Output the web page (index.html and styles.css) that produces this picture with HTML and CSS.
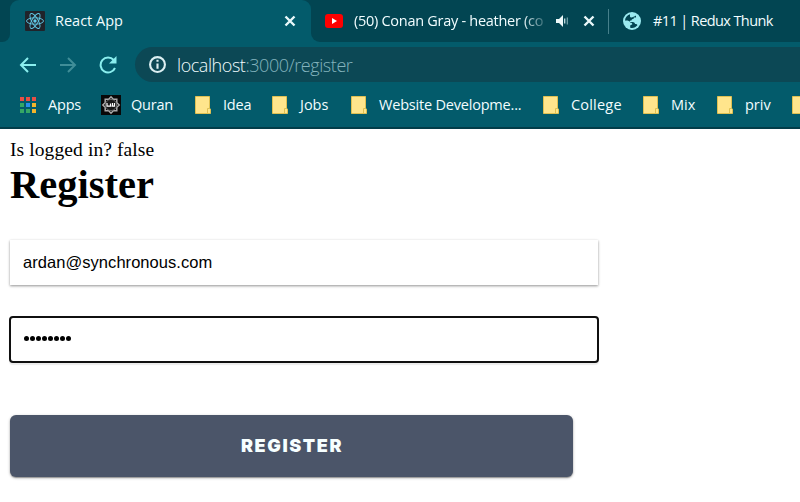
FILE: index.html
```
<!DOCTYPE html>
<html lang="en">
<head>
<meta charset="utf-8">
<title>React App</title>
<link rel="stylesheet" href="styles.css">
</head>
<body>
<svg width="0" height="0" class="defs" aria-hidden="true">
  <symbol id="folder" viewBox="0 0 16 18"><path d="M.5.5h14v11.700l1 .8v4.500H.5z" fill="#ffe58c" stroke="#dfc052"/><path d="M12.500 17v-4.500h2" fill="none" stroke="#dfc052"/></symbol>
  <symbol id="close" viewBox="0 0 12 12"><path d="M1.500 1.500l9 9m0-9l-9 9" stroke="#e9f8fa" stroke-width="2.400"/></symbol>
</svg>
<header class="browser">
  <div class="tabs">
    <div class="tab-edge"></div>
    <div class="tab tab-active">
      <svg class="react" viewBox="0 0 20 20"><rect width="20" height="20" rx="1" fill="#20232a"/><g fill="none" stroke="#61cbe8" stroke-width=".9"><ellipse cx="10" cy="10" rx="8.500" ry="3.200"/><ellipse cx="10" cy="10" rx="8.500" ry="3.200" transform="rotate(60 10 10)"/><ellipse cx="10" cy="10" rx="8.500" ry="3.200" transform="rotate(120 10 10)"/></g><circle cx="10" cy="10" r="1.700" fill="#61cbe8"/></svg>
      <span class="tab-title react-title">React App</span>
      <svg class="close"><use href="#close"/></svg>
    </div>
    <div class="tab tab-video">
      <svg class="video" viewBox="0 0 18 14"><rect width="18" height="14" rx="3" fill="#f00"/><path d="M7 4l5 3-5 3z" fill="#fff"/></svg>
      <span class="tab-title video-title">(50) Conan Gray - heather (co</span>
      <svg class="sound" viewBox="0 0 13 12"><path d="M0 4h3l4-4v12L3 8H0z" fill="#edfafa"/><path d="M8.700 3.500v5" stroke="#c6e0e4" stroke-width="1.300"/><path d="M11.300 2.500v7" stroke="#78a5ad" stroke-width="1.200"/></svg>
      <svg class="close"><use href="#close"/></svg>
    </div>
    <div class="tab tab-redux">
      <svg class="globe" viewBox="0 0 18 18"><circle cx="9" cy="9" r="9" fill="#9beaf0"/><path d="M7 2.200c-3 .8-5 3.600-5 6.500 2.400-.3 4.500.2 5.500 2 1.200 0 2 .5 1.700 1.900-1 .3-2 .3-2 1.400v1.700c3 .9 5.600-.5 7.200-2.400-.4-1.400-1.200-1.300-2.300-1.300-.3-1.300-1-2-2.500-2H6.500c0-1.200 1-1.400 2-1.500 0-1.300 1-1.600 2.200-1.700V5.500H13V3.600C10.500 5.200 7.600 6.500 7 4.500z" fill="#024552"/></svg>
      <span class="tab-title redux-title">#11 | Redux Thunk</span>
    </div>
  </div>
  <div class="toolbar">
    <svg class="nav" viewBox="0 0 18 18"><path d="M17 9H2M9 2L2 9l7 7" fill="none" stroke="#8aeeee" stroke-width="2"/></svg>
    <svg class="nav" viewBox="0 0 18 18"><path d="M1 9h15M9 2l7 7-7 7" fill="none" stroke="#408e98" stroke-width="2"/></svg>
    <svg class="nav" viewBox="0 0 18 18"><path d="M14.700 4A7.500 7.500 0 1 0 16 12" fill="none" stroke="#8aeeee" stroke-width="2"/><path d="M17.500 0v7.500H10z" fill="#8aeeee"/></svg>
    <div class="omnibox">
      <svg class="info" viewBox="0 0 16 16"><circle cx="8" cy="8" r="7" fill="none" stroke="#dceff2" stroke-width="2"/><path d="M8 3.500v2M8 7v5" stroke="#dceff2" stroke-width="2"/></svg>
      <span class="url"><b>localhost</b>:3000/register</span>
    </div>
  </div>
  <nav class="bookmarks">
    <a class="bm"><svg class="apps" viewBox="0 0 17 17"><path fill="#e84f45" d="M0 0h4v4H0zM6 0h4v4H6zM12 0h4v4h-4z"/><path fill="#35a765" d="M0 6h4v4H0zM0 12h4v4H0zM6 12h4v4H6z"/><path fill="#288fee" d="M6 6h4v4H6z"/><path fill="#f3b52b" d="M12 6h4v4h-4zM12 12h4v4h-4z"/></svg><span class="t-apps">Apps</span></a>
    <a class="bm"><svg class="quran" viewBox="0 0 20 20"><path fill="#080808" d="M0 0h20v20H0z"/><path d="M10 1.800l2.300 2.400h3.500v3.500L18.200 10l-2.400 2.300v3.500h-3.500L10 18.200l-2.300-2.400H4.200v-3.500L1.800 10l2.400-2.300V4.200h3.500z" fill="none" stroke="#aaa" stroke-width="1.500"/><circle cx="10" cy="10" r="5.600" fill="#181818" stroke="#777" stroke-width=".8"/><path d="M6 8v3.200h3.500V8.500m1 2.700h3V8m-2 0v3" fill="none" stroke="#fff" stroke-width="1.200"/></svg><span class="t-quran">Quran</span></a>
    <a class="bm"><svg class="folder"><use href="#folder"/></svg><span class="t-idea">Idea</span></a>
    <a class="bm"><svg class="folder"><use href="#folder"/></svg><span class="t-jobs">Jobs</span></a>
    <a class="bm"><svg class="folder"><use href="#folder"/></svg><span class="t-web">Website Developme...</span></a>
    <a class="bm"><svg class="folder"><use href="#folder"/></svg><span class="t-college">College</span></a>
    <a class="bm"><svg class="folder"><use href="#folder"/></svg><span class="t-mix">Mix</span></a>
    <a class="bm"><svg class="folder"><use href="#folder"/></svg><span class="t-priv">priv</span></a>
    <a class="bm"><svg class="folder"><use href="#folder"/></svg></a>
  </nav>
</header>
<main>
  <p class="status">Is logged in? false</p>
  <h1>Register</h1>
  <form>
    <div class="field email">ardan@synchronous.com</div>
    <div class="field password"><i></i><i></i><i></i><i></i><i></i><i></i><i></i><i></i></div>
    <button type="button">REGISTER</button>
  </form>
</main>
</body>
</html>
```
FILE: styles.css
```
* { box-sizing: border-box; }
body { margin: 0; width: 800px; height: 502px; overflow: hidden; background: #fff; color: #000; }
.defs { display: block; }
svg { flex: none; }
.browser { height: 129px; background: #035b6b; border-bottom: 2px solid #023d49; font-family: "Open Sans", "Noto Sans", sans-serif; font-size: 15px; font-weight: 300; color: #f2fdff; overflow: hidden; }
.tabs { display: flex; height: 42px; }
.tab-edge { width: 10px; background: #024552; border-bottom-right-radius: 8px; }
.tab { display: flex; align-items: center; height: 42px; white-space: nowrap; }
.tab-active { width: 301px; padding: 0 15px; background: linear-gradient(#024552, #024552) 0 0 / 10px 10px no-repeat, linear-gradient(#024552, #024552) 100% 0 / 10px 10px no-repeat; position: relative; }
.tab-active::before { content: ""; position: absolute; inset: 0; background: #035b6b; border-radius: 9px 9px 0 0; }
.tab-active > * { position: relative; }
.react { width: 20px; height: 20px; margin-right: 10px; }
.tab-title { font-weight: 400; line-height: 20px; font-size: 14.500px; }
.react-title { width: 229px; }
.close { width: 12px; height: 12px; }
.tab-video { width: 298px; padding-left: 14px; background: #024552; border-bottom-left-radius: 9px; }
.video { width: 18px; height: 14px; margin-right: 11px; }
.video-title { width: 192px; margin-right: 10px; letter-spacing: -.28px; -webkit-mask-image: linear-gradient(90deg, #000 168px, transparent 196px); }
.sound { width: 13px; height: 12px; margin-right: 14px; }
.tab-redux { flex: 1; padding-left: 15px; background: linear-gradient(#46808b, #46808b) 0 9px / 1px 25px no-repeat #024552; margin-left: -1px; }
.globe { width: 18px; height: 18px; margin-right: 12px; }
.redux-title { letter-spacing: -.6px; }
.toolbar { display: flex; height: 45px; align-items: center; padding-left: 19px; }
.nav { width: 18px; height: 18px; margin-right: 22px; }
.omnibox { display: flex; align-items: center; flex: 1; height: 35px; margin-left: -4px; padding-left: 14px; background: #0c4855; border-radius: 18px 0 0 18px; }
.info { width: 17px; height: 17px; margin-right: 11px; }
.url { font-size: 18px; line-height: 24px; letter-spacing: -.44px; color: #83b3bd; white-space: nowrap; }
.url b { font-weight: 300; color: #f2fdff; }
.bookmarks { display: grid; grid-template-columns: 81px 94px 77px 79px 192px 100px 74px 75px 16px; height: 36px; padding-left: 20px; }
.bm { display: flex; align-items: center; white-space: nowrap; font-weight: 400; font-size: 14.500px; }
.bm span { line-height: 20px; }
.t-web { letter-spacing: -.2px; }
.t-quran, .t-idea, .t-apps { letter-spacing: -.2px; }
.t-college { letter-spacing: .2px; }
.folder { width: 16px; height: 18px; margin-right: 12px; }
.apps { width: 17px; height: 17px; margin-right: 11px; }
.quran { width: 20px; height: 20px; margin-right: 10px; }
main { padding: 9px 10px; }
.status { margin: 0; height: 24px; font: 19.500px/24px "Liberation Serif", serif; letter-spacing: .1px; }
h1 { margin: 0; height: 48px; font: bold 40.500px/46px "Liberation Serif", serif; }
form { padding-top: 30px; }
.field { width: 588px; height: 45px; display: flex; background: #fff; font: 16.500px/20px "Liberation Sans", sans-serif; }
.email { align-items: center; padding: 0 0 2px 13px; letter-spacing: .05px; box-shadow: 0 1px 3px rgba(0,0,0,.22), 0 1px 2px rgba(0,0,0,.24); }
.password { width: 590px; height: 47px; margin: 31px 0 0 -1px; border: 2px solid #101010; border-radius: 4px; padding: 18px 0 0 13px; gap: 1px; box-shadow: 0 2px 1px rgba(0,0,0,.08); }
.password i { width: 5px; height: 5px; border-radius: 50%; background: #000; }
button { display: block; width: 563px; height: 62px; margin: 52px 0 0; padding: 0 0 0 1px; border: 0; border-radius: 6px; background: #4b5569; box-shadow: 0 1px 3px rgba(0,0,0,.3), 0 1px 1px rgba(0,0,0,.25); color: #f7ffff; font: 900 18px/62px Inter, "Liberation Sans", sans-serif; letter-spacing: 1.600px; }
```
